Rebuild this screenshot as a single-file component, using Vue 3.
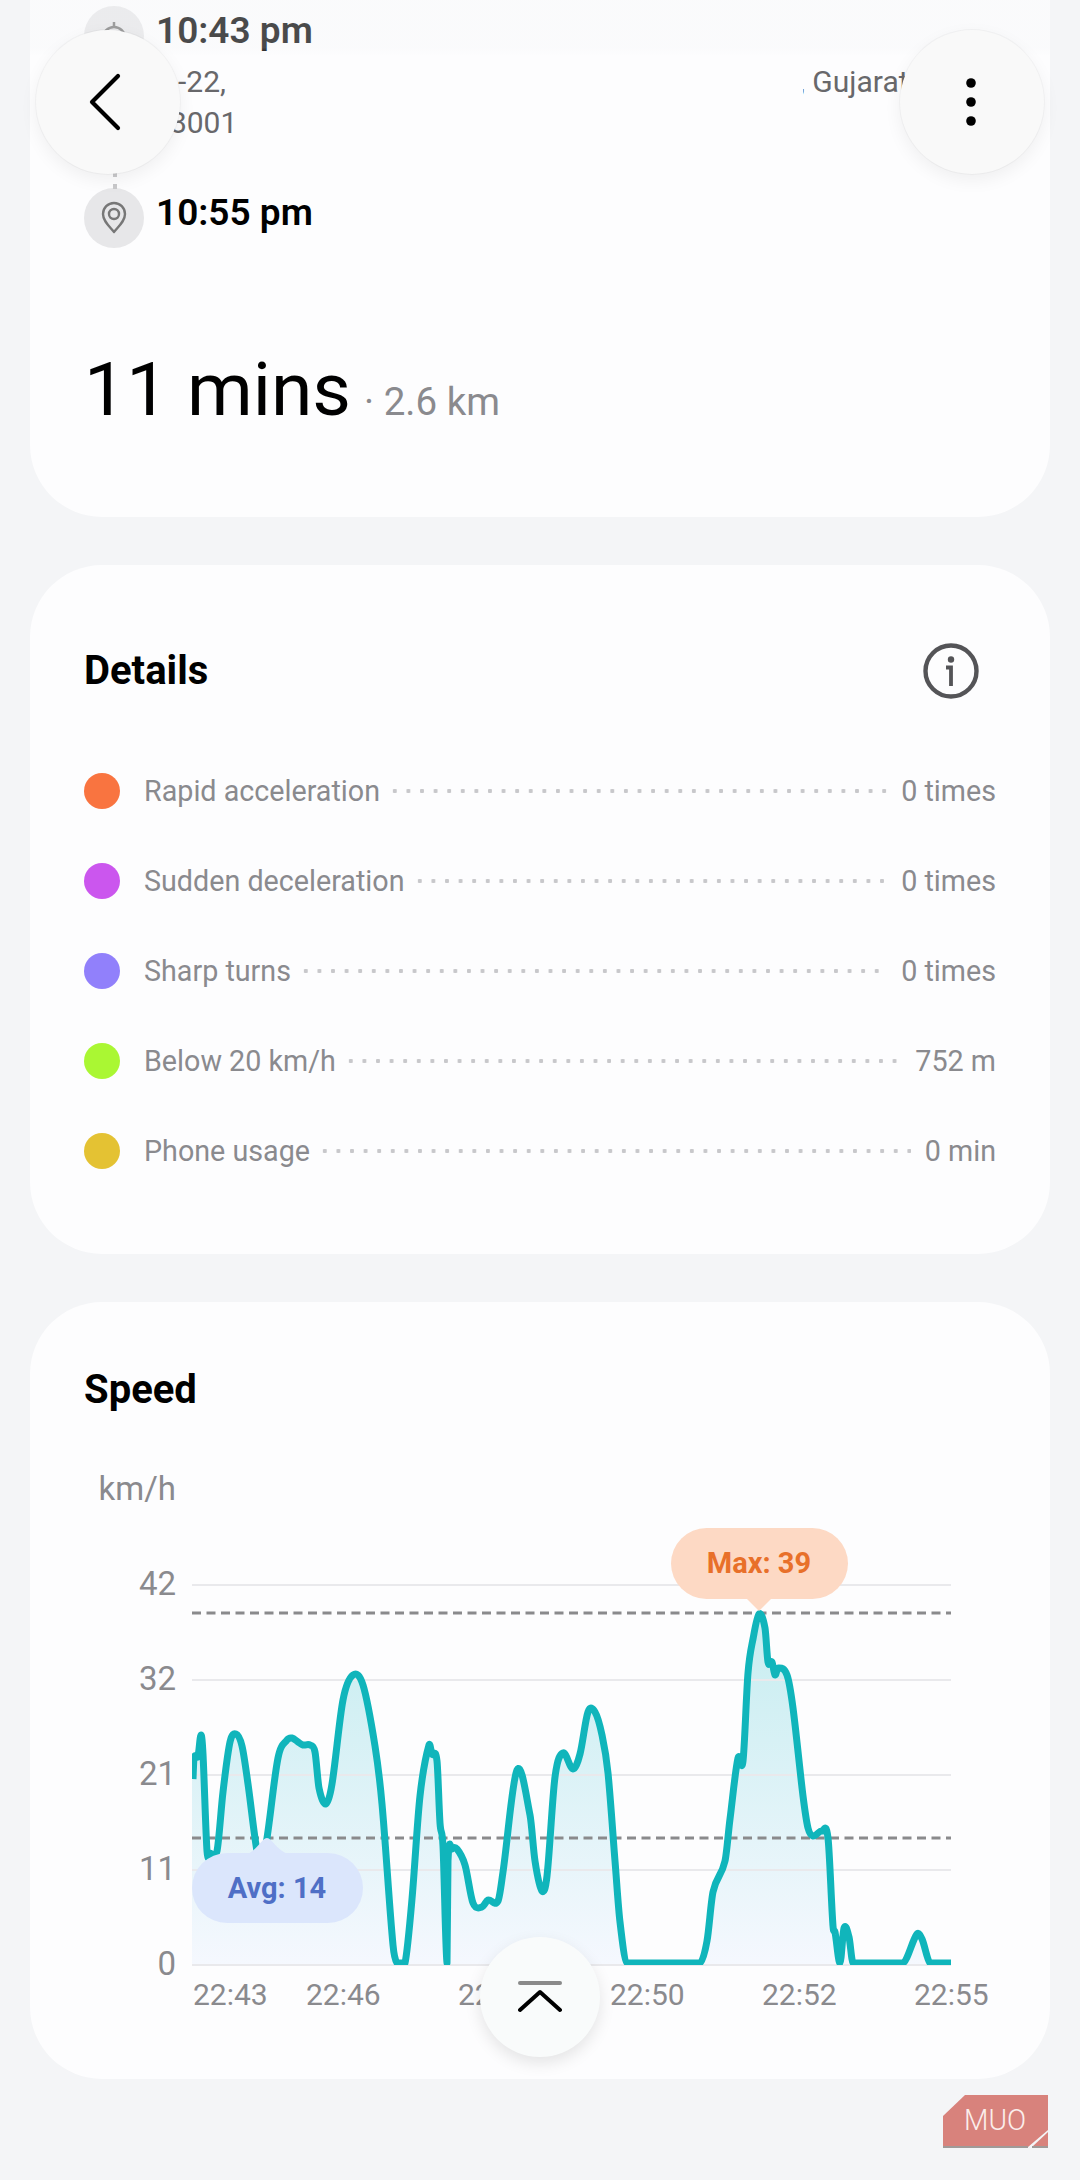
<script setup>
import { computed } from 'vue';

// Drive report screen: route card (scrolled under the floating bar), driving details, speed chart.
const details = [
  { label: 'Rapid acceleration', value: '0 times', color: '#f97440' },
  { label: 'Sudden deceleration', value: '0 times', color: '#cb56ee' },
  { label: 'Sharp turns', value: '0 times', color: '#9180fb' },
  { label: 'Below 20 km/h', value: '752 m', color: '#aaf733' },
  { label: 'Phone usage', value: '0 min', color: '#e4c233' },
];

// Chart geometry is in page pixels, the svg viewBox below lines up with the page.
const left = 192;
const right = 951;
const base = 1965;
const yTicks = [
  { label: '42', y: 1585 },
  { label: '32', y: 1680 },
  { label: '21', y: 1775 },
  { label: '11', y: 1870 },
  { label: '0', y: 1965 },
];
const xTicks = [
  { label: '22:43', x: 193 },
  { label: '22:46', x: 306 },
  { label: '22:48', x: 458 },
  { label: '22:50', x: 610 },
  { label: '22:52', x: 762 },
  { label: '22:55', x: 914 },
];
const speed = [
  [193, 1779], [194, 1758], [198, 1756], [201, 1735], [203, 1754], [207, 1851], [210, 1853], [217, 1851],
  [223, 1792], [230, 1742], [236, 1734], [242, 1746], [248, 1784], [257, 1851], [262, 1860], [267, 1838],
  [278, 1758], [287, 1740], [292, 1738], [298, 1742], [303, 1745], [310, 1745], [315, 1752], [319, 1788],
  [326, 1804], [332, 1784], [343, 1700], [353, 1675], [363, 1685], [375, 1746], [382, 1804], [393, 1945],
  [397, 1963], [405, 1963], [412, 1899], [420, 1796], [429, 1745], [432, 1754], [437, 1761], [440, 1823],
  [443, 1846], [447, 1963], [448, 1861], [452, 1849], [457, 1849], [465, 1865], [473, 1903], [482, 1907],
  [488, 1900], [498, 1901], [503, 1872], [517, 1770], [530, 1815], [535, 1861], [542, 1891], [547, 1876],
  [555, 1777], [563, 1753], [573, 1769], [580, 1754], [588, 1712], [595, 1712], [602, 1735], [608, 1773],
  [615, 1861], [620, 1922], [627, 1963], [700, 1963], [707, 1941], [713, 1892], [725, 1861], [730, 1819],
  [738, 1758], [743, 1761], [748, 1673], [753, 1639], [759, 1614], [765, 1628], [768, 1662], [772, 1662],
  [775, 1675], [778, 1668], [787, 1675], [793, 1708], [803, 1796], [808, 1828], [813, 1836], [822, 1831],
  [828, 1838], [833, 1926], [835, 1932], [840, 1963], [844, 1928], [849, 1937], [853, 1963], [903, 1963],
  [917, 1934], [922, 1939], [930, 1963], [951, 1963],
];

// Hermite segments through the traced points, slopes from the neighbours, kept above the axis
const linePath = computed(() => {
  const p = speed;
  const slope = (i) => {
    const a = p[Math.max(i - 1, 0)];
    const b = p[Math.min(i + 1, p.length - 1)];
    return (b[1] - a[1]) / (b[0] - a[0]);
  };
  let d = `M${p[0][0]} ${p[0][1]}`;
  for (let i = 0; i < p.length - 1; i++) {
    const [x0, y0] = p[i];
    const [x1, y1] = p[i + 1];
    const h = (x1 - x0) / 3;
    const c1y = Math.min(y0 + h * slope(i), 1963);
    const c2y = Math.min(y1 - h * slope(i + 1), 1963);
    d += ` C${(x0 + h).toFixed(1)} ${c1y.toFixed(1)} ${(x1 - h).toFixed(1)} ${c2y.toFixed(1)} ${x1} ${y1}`;
  }
  return d;
});
const areaPath = computed(() => `${linePath.value} L${right} ${base} L${left} ${base} L${left} 1779 Z`);
</script>

<template>
  <div class="page">
    <section class="card route">
      <div class="stop">
        <span class="stop-icon">
          <svg width="32" height="40" viewBox="0 0 32 40" fill="none" stroke="#777" stroke-width="2.5">
            <circle cx="16" cy="22" r="11" />
            <path d="M16 11V6" />
          </svg>
        </span>
        <span class="stop-time">10:43 pm</span>
      </div>
      <div class="address">
        <div class="address-line">
          <span class="addr-a">-22,</span>
          <span class="addr-b">, Gujarat</span>
        </div>
        <div class="address-line">
          <span class="addr-c">38001</span>
        </div>
        <span class="link-dot link-dot-a"></span>
        <span class="link-dot link-dot-b"></span>
        <span class="redact redact-a"></span>
      </div>
      <div class="stop">
        <span class="stop-icon">
          <svg width="30" height="34" viewBox="0 0 30 34" fill="none" stroke="#777" stroke-width="2.4">
            <path d="M15 31C10 25 4 20 4 13a11 11 0 0 1 22 0c0 7-6 12-11 18Z" stroke-linejoin="round" />
            <circle cx="15" cy="13" r="5" />
          </svg>
        </span>
        <span class="stop-time">10:55 pm</span>
      </div>
      <div class="duration">
        <span class="duration-main">11 mins</span>
        <span class="duration-sub">· 2.6 km</span>
      </div>
    </section>

    <section class="card details">
      <div class="details-head">
        <h3>Details</h3>
        <svg class="info" width="56" height="56" viewBox="0 0 56 56" fill="none" stroke="#545457">
          <circle cx="28" cy="28" r="25.5" stroke-width="4.4" />
          <circle cx="28" cy="16.5" r="3.2" fill="#545457" stroke="none" />
          <path d="M23 24.5H28V43" stroke-width="3.8" />
        </svg>
      </div>
      <div v-for="row in details" :key="row.label" class="detail-row">
        <span class="detail-dot" :style="{ background: row.color }"></span>
        <span class="detail-label">{{ row.label }}</span>
        <span class="detail-leader"></span>
        <span class="detail-value">{{ row.value }}</span>
      </div>
    </section>

    <section class="card speed">
      <h3>Speed</h3>
      <svg class="chart" width="1020" height="570" viewBox="30 1460 1020 570">
        <defs>
          <linearGradient id="speedFill" x1="0" y1="1613" x2="0" y2="1965" gradientUnits="userSpaceOnUse">
            <stop offset="0" stop-color="#c6edf0" />
            <stop offset="1" stop-color="#f5f8fe" />
          </linearGradient>
          <clipPath id="plotClip">
            <rect :x="left" y="1560" :width="right - left" :height="base - 1560" />
          </clipPath>
        </defs>
        <text x="176" y="1500" text-anchor="end" class="axis-unit">km/h</text>
        <path :d="areaPath" fill="url(#speedFill)" clip-path="url(#plotClip)" />
        <g v-for="t in yTicks" :key="t.label">
          <text x="176" :y="t.y + 10" text-anchor="end" class="axis-y">{{ t.label }}</text>
          <line :x1="left" :x2="right" :y1="t.y" :y2="t.y" class="grid" />
        </g>
        <line :x1="left" :x2="right" y1="1613" y2="1613" class="dash" />
        <line :x1="left" :x2="right" y1="1838" y2="1838" class="dash" />
        <path :d="linePath" class="curve" clip-path="url(#plotClip)" />
        <text v-for="t in xTicks" :key="t.label" :x="t.x" y="2005" class="axis-x">{{ t.label }}</text>

        <path d="M245 1855C256 1852 262 1838 267 1838C272 1838 276 1850 290 1855Z" fill="#dbe6fc" />
        <rect x="192" y="1853" width="171" height="70" rx="35" fill="#dbe6fc" />
        <text x="277" y="1898" text-anchor="middle" class="tag tag-avg">Avg: 14</text>

        <path d="M744 1596L759 1611L774 1596Z" fill="#fdd9c4" />
        <rect x="671" y="1528" width="177" height="71" rx="35.5" fill="#fdd9c4" />
        <text x="759" y="1573" text-anchor="middle" class="tag tag-max">Max: 39</text>
      </svg>
    </section>

    <div class="top-fade"></div>
    <button class="round-btn back">
      <svg width="32" height="58" viewBox="0 0 32 58" fill="none" stroke="#000" stroke-width="4.2" stroke-linecap="round" stroke-linejoin="round">
        <path d="M29 3L3 29L29 55" />
      </svg>
    </button>
    <button class="round-btn more">
      <svg width="12" height="50" viewBox="0 0 12 50" fill="#000">
        <circle cx="6" cy="6" r="4.8" />
        <circle cx="6" cy="25" r="4.8" />
        <circle cx="6" cy="44" r="4.8" />
      </svg>
    </button>
    <button class="scroll-top">
      <svg width="44" height="32" viewBox="0 0 44 32" fill="none" stroke-width="4" stroke-linecap="round" stroke-linejoin="round">
        <path d="M2 2H42" stroke="#8a8a8a" />
        <path d="M2 29L22 11L42 29" stroke="#000" />
      </svg>
    </button>
    <svg class="logo" width="106" height="54" viewBox="943 2095 106 54">
      <path d="M943 2116L965 2095H1048V2130L1028 2147H943Z" fill="#d8827c" />
      <path d="M1048 2132V2147H1032Z" fill="#d8827c" />
      <path d="M943 2147H1028M1032 2147H1048" stroke="#a09a98" stroke-width="2" />
      <text x="964" y="2130" textLength="62" lengthAdjust="spacingAndGlyphs" class="logo-text">MUO</text>
    </svg>
  </div>
</template>

<style>
body { background: #f4f5f7; }
</style>

<style scoped>
.page {
  position: relative;
  width: 1080px;
  height: 2180px;
  overflow: hidden;
  background: #f4f5f7;
  display: flex;
  flex-direction: column;
  gap: 48px;
  font-family: Roboto, "Liberation Sans", sans-serif;
}
.card {
  margin: 0 30px;
  background: #fdfdfe;
  border-radius: 72px;
  box-sizing: border-box;
}
h3 {
  margin: 0;
  font-size: 40px;
  font-weight: 700;
  line-height: 54px;
  color: #000;
}

.route {
  height: 517px;
  padding: 6px 54px 0;
  border-radius: 0 0 72px 72px;
}
.stop {
  display: flex;
  align-items: center;
  gap: 12px;
  height: 60px;
}
.stop-icon {
  width: 60px;
  height: 60px;
  border-radius: 50%;
  background: #e7e7e9;
  display: flex;
  align-items: center;
  justify-content: center;
  flex-shrink: 0;
}
.stop-time {
  font-size: 37px;
  font-weight: 600;
  color: #000;
  margin-bottom: 12px;
}
.address {
  position: relative;
  height: 122px;
  font-size: 30px;
  line-height: 41px;
  color: #68686b;
}
.address-line {
  position: relative;
  height: 41px;
}
.addr-a { position: absolute; left: 94px; top: -5px; }
.addr-b { position: absolute; left: 715px; top: -5px; white-space: nowrap; }
.addr-c { position: absolute; left: 69px; top: -5px; }
.link-dot {
  position: absolute;
  left: 29px;
  width: 4px;
  height: 5px;
  background: #c9c9cb;
}
.link-dot-a { top: 106px; }
.link-dot-b { top: 118px; }
/* blanked-out part of the address, the card colour over the text */
.redact {
  position: absolute;
  left: 151px;
  top: -11px;
  width: 568px;
  height: 82px;
  background: #fdfdfe;
}
.duration {
  display: flex;
  align-items: baseline;
  gap: 13px;
  margin-top: 93px;
  color: #000;
}
.duration-main { font-size: 75px; line-height: 96px; }
.duration-sub { font-size: 38.5px; color: #8a8a8e; }

.details {
  height: 689px;
  padding: 78px 54px 0;
}
.details-head {
  display: flex;
  align-items: center;
  justify-content: space-between;
  margin-bottom: 47px;
}
.info { margin-right: 17px; }
.detail-row {
  display: flex;
  align-items: center;
  height: 90px;
  font-size: 28.7px;
  color: #8a8a8e;
}
.detail-dot {
  width: 36px;
  height: 36px;
  border-radius: 50%;
  flex-shrink: 0;
  margin-right: 24px;
}
.detail-leader {
  flex: 1;
  height: 4px;
  margin: 0 14px 0 8px;
  background: radial-gradient(circle at center, #c8c8cb 2px, transparent 2.4px) left center / 13.6px 4px repeat-x;
}

.speed {
  position: relative;
  height: 777px;
  padding: 61px 54px 0;
}
.chart {
  position: absolute;
  left: 0;
  top: 158px;
  display: block;
}
.axis-unit, .axis-y { font-size: 33px; fill: #8a8a8e; }
.axis-x { font-size: 30px; fill: #8a8a8e; }
.grid { stroke: #e9e9ec; stroke-width: 2; }
.dash { stroke: #8a8a8c; stroke-width: 3; stroke-dasharray: 9 5.5; }
.curve {
  fill: none;
  stroke: #10b5bb;
  stroke-width: 7;
  stroke-linejoin: round;
}
.tag { font-size: 29px; font-weight: 700; }
.tag-avg { fill: #4f6fc6; }
.tag-max { fill: #e8702a; }

.top-fade {
  position: absolute;
  left: 0;
  top: 0;
  width: 100%;
  height: 56px;
  background: linear-gradient(to bottom, rgba(244, 245, 247, 0.3) 85%, rgba(244, 245, 247, 0));
}
.round-btn, .scroll-top {
  position: absolute;
  padding: 0;
  border: 0;
  border-radius: 50%;
  display: flex;
  align-items: center;
  justify-content: center;
}
.round-btn {
  top: 30px;
  width: 144px;
  height: 144px;
  background: #f9f9f9;
  box-shadow: 0 0 0 1px rgba(0, 0, 0, 0.03), 0 6px 18px rgba(0, 0, 0, 0.06);
}
.back { left: 36px; padding-right: 6px; }
.more { left: 900px; padding-right: 3px; }
.scroll-top {
  left: 480px;
  top: 1937px;
  width: 120px;
  height: 120px;
  background: #f9fbfb;
  box-shadow: 0 6px 16px rgba(0, 0, 0, 0.1);
}
.logo {
  position: absolute;
  left: 943px;
  top: 2095px;
}
.logo-text {
  font-family: Roboto, sans-serif;
  font-size: 29px;
  font-weight: 300;
  fill: #fbeeec;
}
</style>
